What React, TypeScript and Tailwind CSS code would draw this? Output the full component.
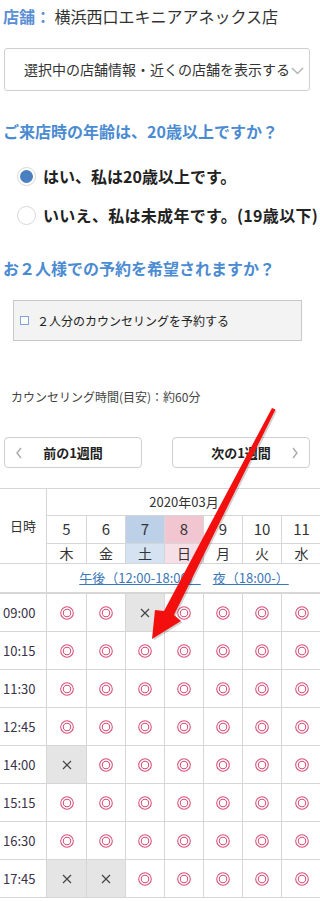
import React from "react";

const days = [
  { d: "5", w: "木", t: "" },
  { d: "6", w: "金", t: "" },
  { d: "7", w: "土", t: "sat" },
  { d: "8", w: "日", t: "sun" },
  { d: "9", w: "月", t: "" },
  { d: "10", w: "火", t: "" },
  { d: "11", w: "水", t: "" },
];

const times = ["09:00", "10:15", "11:30", "12:45", "14:00", "15:15", "16:30", "17:45"];
const closed: Record<string, number[]> = { "09:00": [2], "14:00": [0], "17:45": [0, 1] };

function Maru() {
  return (
    <svg width="16" height="16" viewBox="0 0 16 16">
      <circle cx="8" cy="8" r="6.3" fill="none" stroke="#d64f78" strokeWidth="1.05" />
      <circle cx="8" cy="8" r="3.7" fill="none" stroke="#d64f78" strokeWidth="1.05" />
    </svg>
  );
}

function Batsu() {
  return (
    <svg width="12" height="12" viewBox="0 0 12 12">
      <path d="M2 2 L10 10 M10 2 L2 10" stroke="#444" strokeWidth="1.2" fill="none" />
    </svg>
  );
}

export default function App() {
  return (
    <div className="relative w-[320px] min-h-[901px] overflow-hidden bg-white text-[#333] font-['Noto_Sans_CJK_JP','Noto_Sans',sans-serif]">
      {/* Store */}
      <div className="pt-[5px] pl-[3px] text-[16px] leading-[22px] whitespace-nowrap">
        <span className="font-bold text-[#5a8fd4]">店舗：</span>
        <span> 横浜西口エキニアアネックス店</span>
      </div>

      {/* select */}
      <div className="mt-[21px] ml-[4px] w-[306px] h-[43px] border border-[#cfcfcf] rounded-[3px] flex items-center pl-[19px] whitespace-nowrap">
        <span className="text-[14px] text-[#333]">選択中の店舗情報・近くの店舗を表示する</span>
        <svg width="13" height="8" viewBox="0 0 13 8" className="ml-[1px] mt-[2px]">
          <path d="M1 1 L6.5 6.5 L12 1" stroke="#b4b4b4" strokeWidth="1.5" fill="none" />
        </svg>
      </div>

      {/* age question */}
      <div className="mt-[28px] pl-[3px] text-[16px] leading-[24px] font-bold text-[#4b8bd2] whitespace-nowrap">
        ご来店時の年齢は、20歳以上ですか？
      </div>
      <div className="mt-[21px] pl-[17px] flex items-center gap-[7px] h-[24px] whitespace-nowrap">
        <div className="w-[19px] h-[19px] rounded-full border border-[#d8d8d8] bg-white flex items-center justify-center">
          <div className="w-[13px] h-[13px] rounded-full bg-[#4a7fc0]" />
        </div>
        <span className="text-[16px] font-bold text-[#222]">はい、私は20歳以上です。</span>
      </div>
      <div className="mt-[15px] pl-[17px] flex items-center gap-[7px] h-[24px] whitespace-nowrap">
        <div className="w-[19px] h-[19px] shrink-0 rounded-full border border-[#d8d8d8] bg-white" />
        <span className="text-[16px] font-bold text-[#222] tracking-[0.3px]">いいえ、私は未成年です。(19歳以下)</span>
      </div>

      {/* pair question */}
      <div className="mt-[29px] pl-[3px] text-[16px] leading-[24px] font-bold text-[#4b8bd2] whitespace-nowrap">
        お２人様での予約を希望されますか？
      </div>
      <div className="mt-[20px] ml-[13px] w-[289px] h-[41px] border border-[#c8c8c8] bg-[#f3f3f3] flex items-center pl-[6px] gap-[8px] whitespace-nowrap">
        <div className="w-[9px] h-[9px] border border-[#7ea6d8] bg-white" />
        <span className="text-[12px] text-[#222]">２人分のカウンセリングを予約する</span>
      </div>

      <div className="mt-[47px] pl-[11px] text-[12px] leading-[18px] text-[#444] whitespace-nowrap">
        カウンセリング時間(目安)：約60分
      </div>

      {/* week buttons */}
      <div className="mt-[31px] flex pl-[4px] gap-[30px]">
        <div className="relative w-[138px] h-[31px] border border-[#cfcfcf] rounded-[4px] flex items-center justify-center">
          <svg width="8" height="12" viewBox="0 0 8 12" className="absolute left-[10px] top-[9px]">
            <path d="M6 1 L2 6 L6 11" stroke="#aaa" strokeWidth="1.4" fill="none" />
          </svg>
          <span className="text-[13px] font-bold text-[#222]">前の1週間</span>
        </div>
        <div className="relative w-[138px] h-[31px] border border-[#cfcfcf] rounded-[4px] flex items-center justify-center">
          <span className="text-[13px] font-bold text-[#222]">次の1週間</span>
          <svg width="8" height="12" viewBox="0 0 8 12" className="absolute right-[10px] top-[9px]">
            <path d="M2 1 L6 6 L2 11" stroke="#aaa" strokeWidth="1.4" fill="none" />
          </svg>
        </div>
      </div>

      {/* calendar */}
      <div className="mt-[20px] border-t border-[#d6d6d6] grid grid-cols-[47px_40px_repeat(6,39px)] text-[#333]">
        <div className="row-span-3 border-r border-b border-[#d6d6d6] flex items-center justify-center text-[13px]">日時</div>
        <div className="col-span-7 h-[27px] border-b border-[#d6d6d6] flex items-center justify-center text-[13px]">
          2020年03月
        </div>
        {days.map((d, i) => (
          <div
            key={"d" + i}
            className={
              "h-[28px] border-b border-[#d6d6d6] flex items-center justify-center text-[15px] " +
              (i < 6 ? "border-r " : "") +
              (d.t === "sat" ? "bg-[#bcd0e8]" : d.t === "sun" ? "bg-[#f1c6d0]" : "")
            }
          >
            {d.d}
          </div>
        ))}
        {days.map((d, i) => (
          <div
            key={"w" + i}
            className={
              "h-[20px] border-b border-[#d6d6d6] flex items-center justify-center text-[14px] " +
              (i < 6 ? "border-r " : "") +
              (d.t === "sat" ? "bg-[#d4e2f2]" : d.t === "sun" ? "bg-[#f7dfe7]" : "")
            }
          >
            {d.w}
          </div>
        ))}
        <div className="h-[30px] border-r border-b-2 border-[#d6d6d6]" />
        <div className="col-span-7 h-[30px] border-b-2 border-[#d6d6d6] flex items-center justify-center gap-[12px] text-[13px] text-[#3b77b8] whitespace-nowrap">
          <span className="underline">午後（12:00-18:00）</span>
          <span className="underline">夜（18:00-）</span>
        </div>
        {times.map((t) => (
          <React.Fragment key={t}>
            <div className="h-[38px] border-r border-b border-[#d6d6d6] flex items-center pl-[3px] text-[13px] text-[#3a3248]">
              {t}
            </div>
            {days.map((d, i) => {
              const x = (closed[t] || []).includes(i);
              return (
                <div
                  key={t + i}
                  className={
                    "h-[38px] border-b border-[#d6d6d6] flex items-center justify-center " +
                    (i < 6 ? "border-r " : "") +
                    (x ? "bg-[#e5e5e5]" : "")
                  }
                >
                  {x ? <Batsu /> : <Maru />}
                </div>
              );
            })}
          </React.Fragment>
        ))}
      </div>

      {/* red annotation arrow */}
      <svg className="absolute left-0 top-0 pointer-events-none" width="320" height="901" viewBox="0 0 320 901">
        <polygon
          points="272,408 275.5,409.5 174,615 181,621 152,639 155,610 164,611"
          fill="rgba(0,0,0,0.18)"
          transform="translate(1.5,1.5)"
        />
        <polygon points="272,408 275.5,409.5 174,615 181,621 152,639 155,610 164,611" fill="#f40f0f" />
      </svg>
    </div>
  );
}
